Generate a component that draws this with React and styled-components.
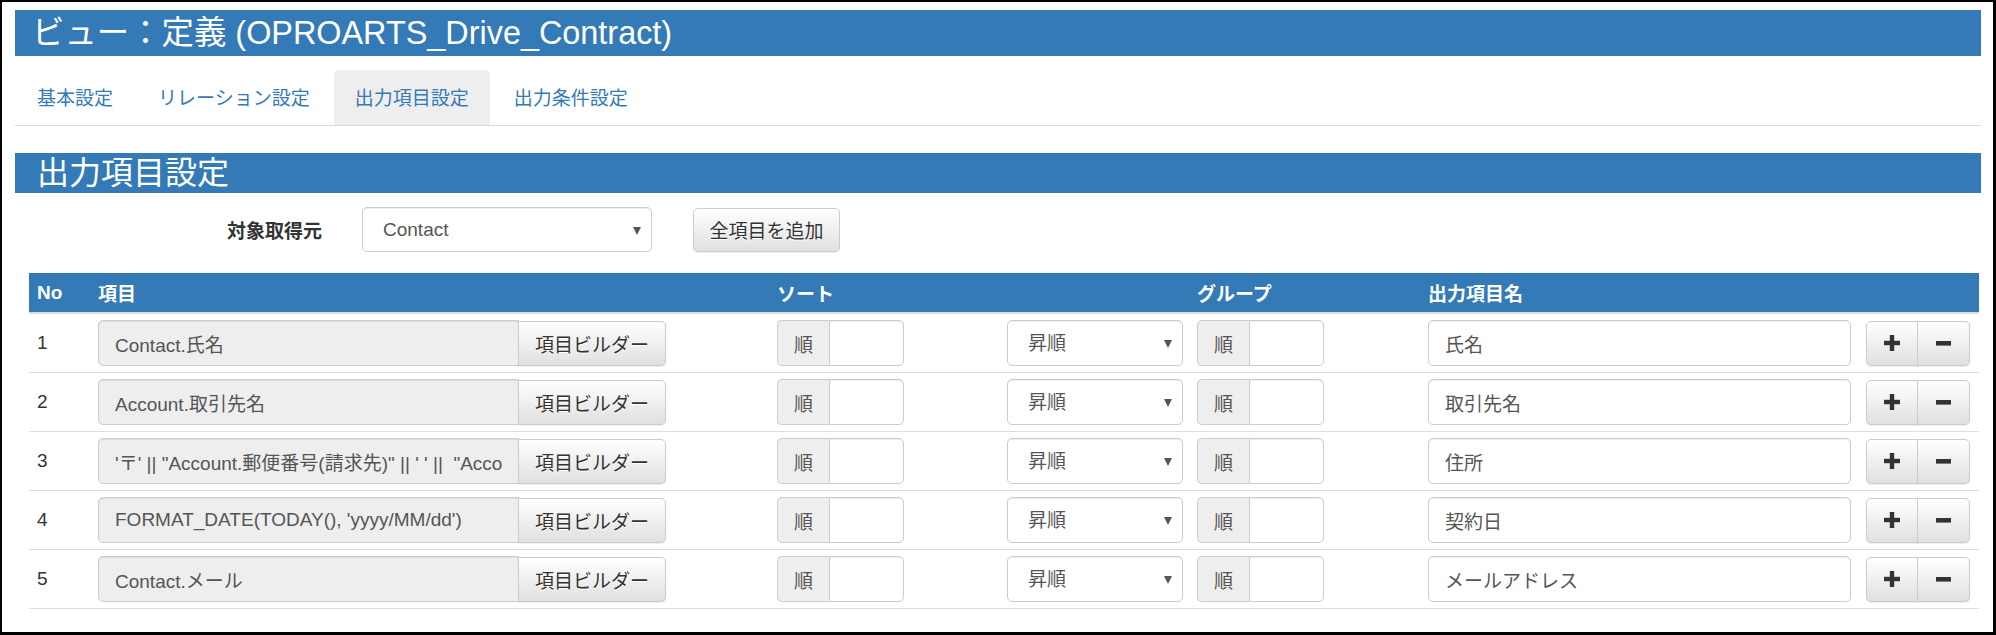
import styled, { createGlobalStyle } from "styled-components";

const blue = "#337ab7";
const font = `"Liberation Sans", "Noto Sans CJK JP", sans-serif`;

const GlobalStyle = createGlobalStyle`
  html, body {
    margin: 0;
    padding: 0;
    background: #fff;
  }
  body {
    font-family: ${font};
    font-size: 19px;
    color: #333;
  }
  *, *::before, *::after {
    box-sizing: border-box;
  }
`;

const Frame = styled.div`
  height: 635px;
  border-style: solid;
  border-color: #000;
  border-width: 2px 3px 3px 2px;
  padding: 8px 12px 0 13px;
  overflow: hidden;
`;

const TitleBar = styled.h1`
  margin: 0;
  height: 46px;
  padding-left: 17px;
  display: flex;
  align-items: center;
  background: ${blue};
  color: #fff;
  font-size: 32.4px;
  font-weight: normal;
  line-height: 1;
  white-space: nowrap;
`;

const Tabs = styled.ul`
  list-style: none;
  margin: 14px 0 0;
  padding: 0 0 0 1px;
  display: flex;
  border-bottom: 1px solid #ddd;
`;

const Tab = styled.li`
  height: 55px;
  padding: 0 21px 2px;
  margin-right: 3px;
  display: flex;
  align-items: center;
  border-radius: 5px 5px 0 0;
  color: ${blue};
  background: ${(p) => (p.$active ? "#eee" : "transparent")};
  font-size: 19px;
`;

const SectionBar = styled.h2`
  margin: 27px 0 0;
  height: 40px;
  padding-left: 22px;
  display: flex;
  align-items: center;
  background: ${blue};
  color: #fff;
  font-size: 32px;
  font-weight: normal;
  line-height: 1;
`;

const FormRow = styled.div`
  margin-top: 14px;
  height: 45px;
  display: flex;
  align-items: center;
`;

const FormLabel = styled.label`
  width: 307px;
  margin-right: 40px;
  text-align: right;
  font-weight: bold;
  color: #333;
`;

const SelectWrap = styled.div`
  position: relative;
  width: ${(p) => p.$width}px;
  height: ${(p) => p.$height || 46}px;
  flex: none;
`;

const Select = styled.select`
  appearance: none;
  width: 100%;
  height: 100%;
  margin: 0;
  padding: 0 30px 0 20px;
  border: 1px solid #ccc;
  border-radius: 5px;
  background: #fff;
  color: #555;
  font-family: ${font};
  font-size: 19px;
  box-shadow: inset 0 1px 1px rgba(0, 0, 0, 0.075);
`;

const Caret = styled.span`
  position: absolute;
  right: 11px;
  top: 50%;
  margin-top: -3px;
  width: 0;
  height: 0;
  border-left: 4.5px solid transparent;
  border-right: 4.5px solid transparent;
  border-top: 8px solid #555;
  pointer-events: none;
`;

const Button = styled.button`
  flex: none;
  width: ${(p) => p.$width}px;
  height: ${(p) => p.$height || 45}px;
  margin: 0 0 0 ${(p) => p.$offset || 0}px;
  padding: 0;
  display: flex;
  align-items: center;
  justify-content: center;
  border: 1px solid #ccc;
  border-radius: ${(p) => p.$radius || "5px"};
  background-image: linear-gradient(to bottom, #fff 0, #e0e0e0 100%);
  box-shadow: inset 0 1px 0 rgba(255, 255, 255, 0.15), 0 1px 1px rgba(0, 0, 0, 0.075);
  text-shadow: 0 1px 0 #fff;
  color: #333;
  font-family: ${font};
  font-size: 19px;
`;

const Table = styled.div`
  margin: 21px 2px 0 14px;
`;

const columns = "61px 679px 230px 190px 231px 437px 122px";

const HeadRow = styled.div`
  display: grid;
  grid-template-columns: ${columns};
  align-items: center;
  height: 41px;
  background: ${blue};
  border-bottom: 2px solid #ddd;
  color: #fff;
  font-weight: bold;
`;

const HeadCell = styled.div`
  padding: 0 8px;
  grid-column: span ${(p) => p.$span || 1};
`;

const BodyRow = styled.div`
  display: grid;
  grid-template-columns: ${columns};
  align-items: center;
  padding: 6px 0;
  border-bottom: 1px solid #ddd;
`;

const Cell = styled.div`
  padding: 0 8px;
  display: flex;
  align-items: center;
`;

const Num = styled.span`
  color: #333;
`;

const TextInput = styled.input`
  flex: none;
  width: ${(p) => p.$width}px;
  height: 46px;
  margin: 0;
  padding: 0 16px;
  border: 1px solid #ccc;
  border-radius: ${(p) => p.$radius || "5px"};
  background: ${(p) => (p.readOnly ? "#eee" : "#fff")};
  color: #555;
  font-family: ${font};
  font-size: 19px;
  white-space: pre;
  box-shadow: inset 0 1px 1px rgba(0, 0, 0, 0.075);
  outline: none;
`;

const Addon = styled.span`
  flex: none;
  width: 52px;
  height: 46px;
  display: flex;
  align-items: center;
  justify-content: center;
  border: 1px solid #ccc;
  border-right: 0;
  border-radius: 5px 0 0 5px;
  background: #eee;
  color: #555;
`;

const ButtonGroup = styled.div`
  display: flex;
  margin-left: 1px;
`;

function PlusIcon() {
  return (
    <svg width="16" height="16" viewBox="0 0 16 16" aria-hidden="true">
      <rect x="5.8" y="0" width="4.4" height="16" fill="#333" />
      <rect x="0" y="5.8" width="16" height="4.4" fill="#333" />
    </svg>
  );
}

function MinusIcon() {
  return (
    <svg width="15" height="5" viewBox="0 0 15 5" aria-hidden="true">
      <rect x="0" y="0" width="15" height="4.6" fill="#333" />
    </svg>
  );
}

function OrderInput() {
  return (
    <>
      <Addon>順</Addon>
      <TextInput $width={75} $radius="0 5px 5px 0" defaultValue="" />
    </>
  );
}

function DirectionSelect() {
  return (
    <SelectWrap $width={176}>
      <Select defaultValue="asc">
        <option value="asc">昇順</option>
        <option value="desc">降順</option>
      </Select>
      <Caret />
    </SelectWrap>
  );
}

const rows = [
  { no: 1, expr: "Contact.氏名", name: "氏名" },
  { no: 2, expr: "Account.取引先名", name: "取引先名" },
  {
    no: 3,
    expr: `'〒' || "Account.郵便番号(請求先)" || ' ' ||  "Account.都道府県(請求先)"`,
    name: "住所",
  },
  { no: 4, expr: "FORMAT_DATE(TODAY(), 'yyyy/MM/dd')", name: "契約日" },
  { no: 5, expr: "Contact.メール", name: "メールアドレス" },
];

export default function App() {
  return (
    <>
      <GlobalStyle />
      <Frame>
        <TitleBar>ビュー：定義 (OPROARTS_Drive_Contract)</TitleBar>
        <Tabs>
          <Tab>基本設定</Tab>
          <Tab>リレーション設定</Tab>
          <Tab $active>出力項目設定</Tab>
          <Tab>出力条件設定</Tab>
        </Tabs>

        <SectionBar>出力項目設定</SectionBar>
        <FormRow>
          <FormLabel>対象取得元</FormLabel>
          <SelectWrap $width={290} $height={45}>
            <Select defaultValue="Contact">
              <option value="Contact">Contact</option>
              <option value="Account">Account</option>
            </Select>
            <Caret />
          </SelectWrap>
          <Button $width={147} $height={44} $offset={41}>
            全項目を追加
          </Button>
        </FormRow>

        <Table>
          <HeadRow>
            <HeadCell>No</HeadCell>
            <HeadCell>項目</HeadCell>
            <HeadCell $span={2}>ソート</HeadCell>
            <HeadCell>グループ</HeadCell>
            <HeadCell>出力項目名</HeadCell>
            <HeadCell />
          </HeadRow>
          {rows.map((row) => (
            <BodyRow key={row.no}>
              <Cell>
                <Num>{row.no}</Num>
              </Cell>
              <Cell>
                <TextInput $width={421} $radius="5px 0 0 5px" readOnly value={row.expr} />
                <Button $width={148} $offset={-1} $radius="0 5px 5px 0">
                  項目ビルダー
                </Button>
              </Cell>
              <Cell>
                <OrderInput />
              </Cell>
              <Cell>
                <DirectionSelect />
              </Cell>
              <Cell>
                <OrderInput />
              </Cell>
              <Cell>
                <TextInput $width={423} defaultValue={row.name} />
              </Cell>
              <Cell>
                <ButtonGroup>
                  <Button $width={52} $radius="5px 0 0 5px" aria-label="追加">
                    <PlusIcon />
                  </Button>
                  <Button $width={53} $offset={-1} $radius="0 5px 5px 0" aria-label="削除">
                    <MinusIcon />
                  </Button>
                </ButtonGroup>
              </Cell>
            </BodyRow>
          ))}
        </Table>
      </Frame>
    </>
  );
}
